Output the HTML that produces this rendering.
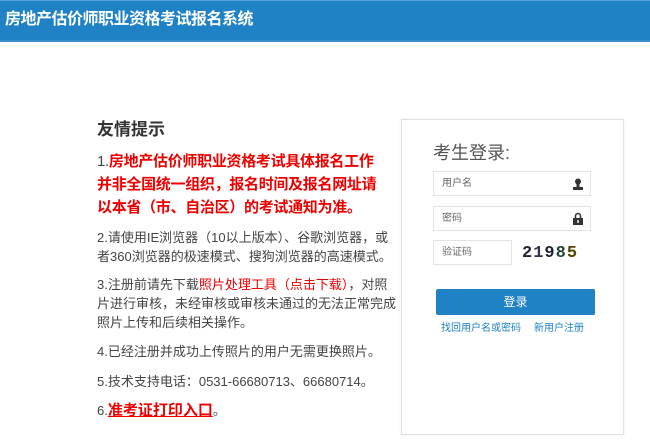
<!DOCTYPE html>
<html><head><meta charset="utf-8"><style>
body{margin:0;width:650px;height:445px;background:#fff;font-family:"Liberation Sans","Noto Sans CJK SC",sans-serif;position:relative;overflow:hidden}
.hd{position:absolute;left:0;top:0;width:650px;height:42px;background:#1e82c5;border-top:1px solid #5aa6d8;border-bottom:2px solid #3a8fcb;box-sizing:border-box}
.hd span{position:absolute;left:5px;top:4px;color:#fff;font-weight:bold;font-size:16px;letter-spacing:-0.5px}
.a{position:absolute;left:97px;color:#444;font-size:13px;line-height:19px;width:300px}
.r{color:#e00;font-weight:bold}
.box{position:absolute;left:401px;top:119px;width:223px;height:316px;border:1px solid #e2e2e2;box-shadow:0 0 3px #eee;box-sizing:border-box}
.in{position:absolute;border:1px solid #e3e3e3;box-sizing:border-box;height:25px;font-size:10px;color:#666;padding:0 8px;line-height:23px}
.btn{position:absolute;left:436px;top:289px;width:159px;height:26px;background:#1e82c5;border-radius:2px;color:#fff;font-size:12px;text-align:center;line-height:26px}
.lk{position:absolute;top:319px;color:#1e82c5;font-size:10px}
</style></head><body>
<div class="hd"><span>房地产估价师职业资格考试报名系统</span></div>
<div class="a" style="top:119px;font-size:17px;font-weight:bold;color:#333;line-height:22px">友情提示</div>
<div class="a" style="top:150px;font-size:15px;line-height:23px;letter-spacing:-0.3px;width:286px"><span style="font-weight:normal;color:#444">1.</span><span class="r">房地产估价师职业资格考试具体报名工作并非全国统一组织，报名时间及报名网址请以本省（市、自治区）的考试通知为准。</span></div>
<div class="a" style="top:228px">2.请使用IE浏览器（10以上版本）、谷歌浏览器，或者360浏览器的极速模式、搜狗浏览器的高速模式。</div>
<div class="a" style="top:275px">3.注册前请先下载<span style="color:#e00">照片处理工具（点击下载）</span>，对照片进行审核，未经审核或审核未通过的无法正常完成照片上传和后续相关操作。</div>
<div class="a" style="top:342px">4.已经注册并成功上传照片的用户无需更换照片。</div>
<div class="a" style="top:372px">5.技术支持电话：0531-66680713、66680714。</div>
<div class="a" style="top:401px;font-size:13px">6.<span class="r" style="font-size:15px;text-decoration:underline">准考证打印入口</span>。</div>
<div class="box"></div>
<div style="position:absolute;left:433px;top:139px;font-size:18px;color:#555">考生登录:</div>
<div class="in" style="left:433px;top:171px;width:158px">用户名<span style="position:absolute;right:7px;top:6px;width:10px;height:12px;line-height:0"><svg width="10" height="12"><circle cx="5" cy="3.5" r="3" fill="#333"/><rect x="3.5" y="6" width="3" height="3" fill="#333"/><rect x="0" y="9" width="10" height="3" fill="#333"/></svg></span></div>
<div class="in" style="left:433px;top:206px;width:158px">密码<span style="position:absolute;right:7px;top:5px;line-height:0"><svg width="10" height="13"><path d="M2.5 6V4a2.5 2.5 0 0 1 5 0v2" stroke="#333" stroke-width="1.6" fill="none"/><rect x="0" y="6" width="10" height="7" fill="#333"/><rect x="4.3" y="8" width="1.4" height="3" fill="#fff"/></svg></span></div>
<div class="in" style="left:433px;top:240px;width:79px">验证码</div>
<div style="position:absolute;left:522px;top:244px;font-family:'Liberation Mono',monospace;font-weight:bold;font-size:17px;letter-spacing:1px;color:#223">2<span style="color:#334">1</span>9<span style="color:#243">8</span><span style="color:#540">5</span></div>
<div class="btn">登录</div>
<div class="lk" style="left:441px">找回用户名或密码</div>
<div class="lk" style="left:534px">新用户注册</div>
</body></html>
